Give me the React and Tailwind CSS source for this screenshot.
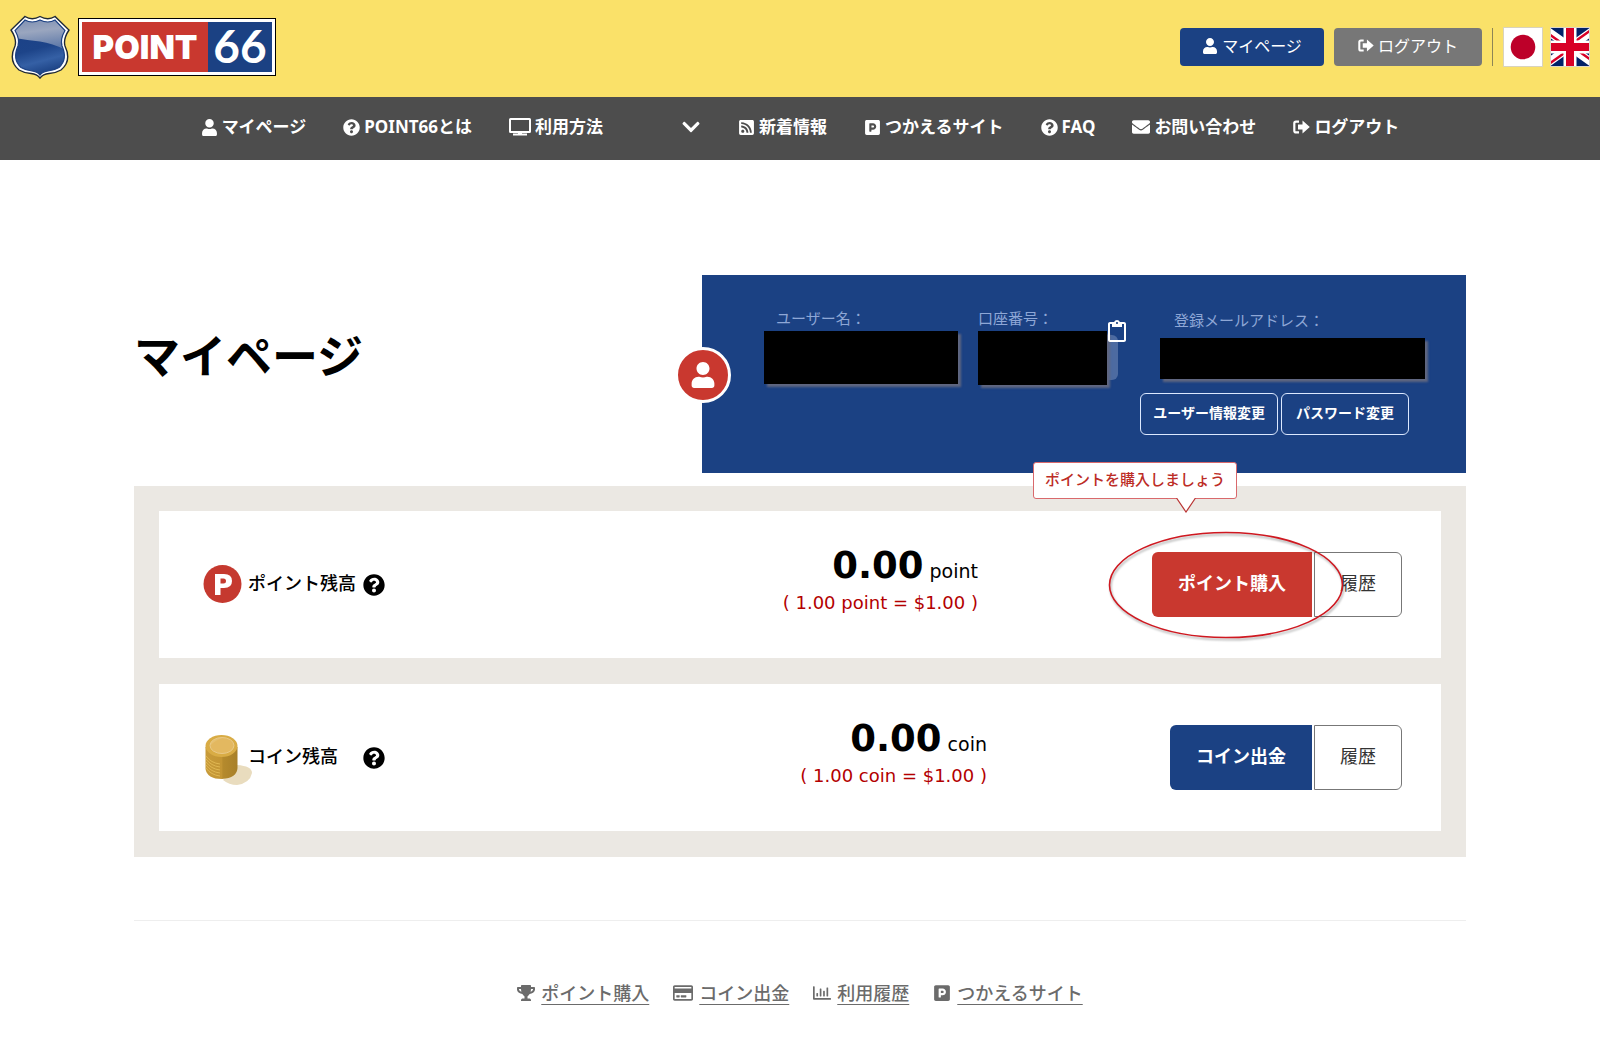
import { FaUser, FaQuestionCircle, FaChevronDown, FaRssSquare, FaParking, FaEnvelope, FaTrophy, FaRegCreditCard, FaRegChartBar } from "react-icons/fa";
import { MdContentPaste } from "react-icons/md";

function Shield() {
  return (
    <svg viewBox="0 0 60 64" className="h-16 w-15 shrink-0" aria-hidden="true">
      <defs>
        <linearGradient id="shieldBlue" x1="0" y1="0" x2="0.25" y2="1">
          <stop offset="0" stopColor="#1a3f85" />
          <stop offset="0.6" stopColor="#1d4489" />
          <stop offset="0.8" stopColor="#3560a5" />
          <stop offset="1" stopColor="#1b4183" />
        </linearGradient>
        <linearGradient id="shieldGloss" x1="0" y1="0" x2="0.2" y2="1">
          <stop offset="0" stopColor="#7386ad" />
          <stop offset="0.5" stopColor="#9aa6bf" />
          <stop offset="1" stopColor="#5d78a8" />
        </linearGradient>
        <clipPath id="shieldInner">
          <path d="M15 5 Q22 9 30 5 Q38 9 45 5 L55 15.500 Q50 24 52 31 Q58 44 49 52.500 Q44 55.500 38 56 Q33 56.500 30 60 Q27 56.500 22 56 Q16 55.500 11 52.500 Q2 44 8 31 Q10 24 5 15.500 Z" />
        </clipPath>
      </defs>
      <path d="M15 1.500 Q22 6 30 1.500 Q38 6 45 1.500 L59 15 Q53 24 55 31 Q62 46 51 55 Q46 58 39 58.500 Q33 59 30 63 Q27 59 21 58.500 Q14 58 9 55 Q-2 46 5 31 Q7 24 1 15 Z" fill="#fff" stroke="#1f2937" strokeWidth="1.400" />
      <g clipPath="url(#shieldInner)">
        <rect width="60" height="64" fill="url(#shieldBlue)" />
        <path d="M0 0 H60 V37 Q45 29 30 26.500 Q16 25 0 22 Z" fill="url(#shieldGloss)" />
      </g>
      <path d="M15 5 Q22 9 30 5 Q38 9 45 5 L55 15.500 Q50 24 52 31 Q58 44 49 52.500 Q44 55.500 38 56 Q33 56.500 30 60 Q27 56.500 22 56 Q16 55.500 11 52.500 Q2 44 8 31 Q10 24 5 15.500 Z" fill="none" stroke="#1c4183" strokeWidth="1.200" />
    </svg>
  );
}

function SignOut({ className }) {
  return (
    <svg viewBox="0 0 17 14" className={className} aria-hidden="true">
      <path d="M6 1.600 H3 Q1.300 1.600 1.300 3.300 V10.700 Q1.300 12.400 3 12.400 H6" fill="none" stroke="currentColor" strokeWidth="2.200" />
      <path d="M5 4.600 H9.500 V0.600 L16.800 7 L9.500 13.400 V9.400 H5 Z" fill="currentColor" />
    </svg>
  );
}

function Desktop() {
  return (
    <svg viewBox="0 0 22 18" className="h-[18px] w-[22px]" fill="none" aria-hidden="true">
      <rect x="1" y="1" width="20" height="13" rx="0.500" stroke="#fff" strokeWidth="2" />
      <path d="M9 14 H13 V15.500 H18 V17.500 H4 V15.500 H9 Z" fill="#fff" />
    </svg>
  );
}

function PointMark() {
  return (
    <svg viewBox="0 0 40 40" className="h-10 w-10" aria-hidden="true">
      <circle cx="20.500" cy="19" r="19" fill="#c5392f" />
      <path fillRule="evenodd" fill="#fff" d="M13 9 H22 Q30 9 30 16 Q30 23 22 23 H18.500 V30 H13 Z M18.500 13.500 V18.500 H21.500 Q24 18.500 24 16 Q24 13.500 21.500 13.500 Z" />
    </svg>
  );
}

function CoinStack() {
  return (
    <svg viewBox="-3 -2 48 52" className="h-[52px] w-12 overflow-visible" aria-hidden="true">
      <defs>
        <linearGradient id="coinSide" x1="0" y1="0" x2="1" y2="0">
          <stop offset="0" stopColor="#c89b3a" />
          <stop offset="0.5" stopColor="#c39534" />
          <stop offset="0.55" stopColor="#b58a2d" />
          <stop offset="1" stopColor="#a88029" />
        </linearGradient>
      </defs>
      <path d="M18 46 L32 31 Q47 32 47 39 Q45 49 32 51 Q24 51 18 46 Z" fill="#e9dcbe" />
      <path d="M0.500 13 V35 Q2 45 17 45 Q32 44 32.500 34 V13 Z" fill="url(#coinSide)" />
      <path d="M1 22 Q6 29 15 30 M1 25 Q6 32 15 33 M1 28 Q6 35 15 36 M1 31 Q6 38 15 39 M1 34 Q6 41 15 42" fill="none" stroke="#e0b752" strokeWidth="1" />
      <ellipse cx="16.500" cy="12" rx="16" ry="11" fill="#d9ac45" />
      <ellipse cx="17" cy="11.500" rx="12" ry="8" fill="#e6c070" />
      <path d="M5 12 Q10 6 19 3.600 Q29 5 29 11.500 Q28 15 24 18 Q18 20 12 19 Q6 17 5 12 Z" fill="#e3b860" />
      <ellipse cx="17" cy="11.500" rx="12" ry="8" fill="none" stroke="#e9c987" strokeWidth="1" />
    </svg>
  );
}

function Japan() {
  return (
    <svg viewBox="0 0 40 40" className="h-10 w-10" aria-hidden="true">
      <rect x="0.500" y="0.500" width="39" height="39" fill="#fff" stroke="#d9d3bd" />
      <circle cx="20" cy="20" r="12.300" fill="#bd0029" />
    </svg>
  );
}

function Britain() {
  return (
    <svg viewBox="0 0 40 40" className="h-10 w-10" aria-hidden="true">
      <rect width="40" height="40" fill="#012169" />
      <path d="M-8 0 L48 40 M48 0 L-8 40" stroke="#fff" strokeWidth="8" />
      <path d="M20 22 L-8 2 M20 18 L48 38 M20 18 L48 -2 M20 22 L-8 42" stroke="#d80027" strokeWidth="2.500" />
      <path d="M20 0 V40 M0 20 H40" stroke="#fff" strokeWidth="13" />
      <path d="M20 0 V40 M0 20 H40" stroke="#d80027" strokeWidth="8" />
      <rect x="0.500" y="0.500" width="39" height="39" fill="none" stroke="#ded7c4" />
    </svg>
  );
}

const menu = [
  { icon: <FaUser size={17} />, label: "マイページ" },
  { icon: <FaQuestionCircle size={17} />, label: "POINT66とは" },
  { icon: <Desktop />, label: "利用方法", more: true },
  { icon: <FaRssSquare size={17} />, label: "新着情報" },
  { icon: <FaParking size={17} />, label: "つかえるサイト" },
  { icon: <FaQuestionCircle size={17} />, label: "FAQ" },
  { icon: <FaEnvelope size={18} />, label: "お問い合わせ" },
  { icon: <SignOut className="h-[14px] w-[17px]" />, label: "ログアウト" },
];

const footerLinks = [
  { icon: <FaTrophy size={18} />, label: "ポイント購入" },
  { icon: <FaRegCreditCard size={20} />, label: "コイン出金" },
  { icon: <FaRegChartBar size={18} />, label: "利用履歴" },
  { icon: <FaParking size={18} />, label: "つかえるサイト" },
];

function Balance({ mark, label, unit, gap, action, actionColor, children }) {
  return (
    <section className="flex h-[147px] items-center bg-white pr-[39px] pl-[43px]">
      <div className="flex w-[46px] shrink-0 items-center">{mark}</div>
      <h2 className="w-[115px] pb-[3px] text-lg font-medium whitespace-nowrap text-black">{label}</h2>
      <button type="button" aria-label={`${label}について`} className="text-black">
        <FaQuestionCircle size={22} />
      </button>
      <div className="ml-auto pb-3 text-right font-['DejaVu_Sans','Noto_Sans_CJK_JP',sans-serif] whitespace-nowrap">
        <p className="text-[19px] leading-[44px] text-black">
          <strong className="text-[37px] font-bold">0.00</strong> {unit}
        </p>
        <p className="text-lg leading-5 text-[#b30000]">( 1.00 {unit} = $1.00 )</p>
      </div>
      <div className={`relative flex gap-0.5 ${gap}`}>
        <button type="button" className={`h-[65px] rounded-l-md px-[26px] pb-1 text-lg font-bold whitespace-nowrap text-white ${actionColor}`}>
          {action}
        </button>
        <button type="button" className="h-[65px] rounded-r-md border border-[#777] bg-white px-[25px] pb-1 text-lg whitespace-nowrap text-[#333]">
          履歴
        </button>
        {children}
      </div>
    </section>
  );
}

export default function App() {
  return (
    <div className="min-h-screen bg-white font-['Noto_Sans','Noto_Sans_CJK_JP',sans-serif] text-black">
      <header className="flex h-[97px] items-center justify-between bg-[#fae169] pr-[10px] pb-1 pl-[10px]">
        <a href="#" className="flex items-center gap-2">
          <Shield />
          <span className="flex h-[58px] border border-black bg-white p-[3px] text-white">
            <span className="flex w-[126px] items-center justify-center bg-[#c9382f] pt-0.5 font-['Inter',sans-serif] text-[33px] font-black">POINT</span>
            <span className="flex w-16 items-center justify-center bg-[#1b4183] pb-0.5 font-['Lato',sans-serif] text-[46px] leading-[46px] font-bold">66</span>
          </span>
        </a>
        <div className="flex items-center">
          <button type="button" className="flex h-[38px] w-36 items-center justify-center gap-1 rounded bg-[#1b4183] pb-0.5 text-base text-white">
            <FaUser size={16} />
            マイページ
          </button>
          <button type="button" className="ml-[10px] flex h-[38px] w-[148px] items-center justify-center gap-1 rounded bg-[#777] pb-0.5 text-base text-white">
            <SignOut className="h-[13px] w-4" />
            ログアウト
          </button>
          <span className="mr-[10px] ml-[10px] h-[38px] w-px bg-[#8d8556]" />
          <button type="button" aria-label="日本語"><Japan /></button>
          <button type="button" aria-label="English" className="ml-[7px]"><Britain /></button>
        </div>
      </header>

      <nav className="flex h-[63px] items-center justify-center gap-[37px] bg-[#4d4d4d] pb-[3px] text-[17px] font-bold text-white">
        {menu.map((item) => (
          <a key={item.label} href="#" className="flex items-center gap-1 whitespace-nowrap">
            {item.icon}
            {item.label}
            {item.more && <FaChevronDown size={20} className="ml-[74px]" />}
          </a>
        ))}
      </nav>

      <main className="px-[134px] pt-[115px]">
        <div className="flex justify-between">
          <h1 className="pt-[44px] text-[46px] leading-[72px] font-bold">マイページ</h1>
          <section className="relative h-[198px] w-[764px] bg-[#1b4183] pt-[31px] pl-[62px] text-[15px] text-[#8ea7d6]">
            <span className="absolute top-[72px] -left-[27px] flex h-14 w-14 items-center justify-center rounded-full border-[3px] border-white bg-[#c9382f] text-white">
              <FaUser size={26} />
            </span>
            <div className="flex">
              <div className="w-[194px]">
                <p className="pb-px pl-3 leading-6">ユーザー名：</p>
                <div className="h-[53px] bg-black shadow-[3px_3px_2px_#5f6680]" />
              </div>
              <div className="relative ml-5 w-[129px]">
                <p className="pb-px leading-6">口座番号：</p>
                <div className="absolute top-[29px] -right-[11px] h-[45px] w-5 rounded-md bg-[#4d6ba1]" />
                <div className="relative h-[54px] bg-black shadow-[3px_3px_2px_#5f6680]" />
                <button type="button" aria-label="口座番号をコピー" className="absolute top-[14px] -right-[22px] text-white">
                  <MdContentPaste size={24} />
                </button>
              </div>
              <div className="ml-[53px] w-[265px]">
                <p className="pt-0.5 pb-1.5 pl-[14px] leading-6">登録メールアドレス：</p>
                <div className="h-[41px] bg-black shadow-[3px_3px_2px_#5f6680]" />
              </div>
            </div>
            <div className="mt-[8px] flex justify-end gap-[3px] pr-[57px] text-sm font-bold text-white">
              <button type="button" className="h-[42px] rounded-md border border-[#dbe8ff] px-3 pb-0.5">ユーザー情報変更</button>
              <button type="button" className="h-[42px] rounded-md border border-[#dbe8ff] px-3.5 pb-0.5">パスワード変更</button>
            </div>
          </section>
        </div>

        <div className="mt-[13px] flex flex-col gap-[26px] bg-[#ebe8e3] px-[25px] pt-[25px] pb-[26px]">
          <Balance mark={<PointMark />} label="ポイント残高" unit="point" gap="ml-[174px]" action="ポイント購入" actionColor="bg-[#c9382f]">
            <svg viewBox="0 0 240 112" className="pointer-events-none absolute -top-[22px] -left-[45px] h-28 w-60 drop-shadow-[1px_2px_1px_rgba(0,0,0,0.35)]" fill="none" aria-hidden="true">
              <ellipse cx="119" cy="55" rx="116.500" ry="52.500" stroke="#cf1820" strokeWidth="1.600" />
            </svg>
            <div className="absolute -top-[90px] -left-[119px] rounded-[3px] border border-[#d9696c] bg-white px-[11px] pb-0.5 text-[15px] leading-[33px] font-medium whitespace-nowrap text-[#bc2c26]">
              ポイントを購入しましょう
              <svg viewBox="0 0 20 15" className="absolute top-[35px] left-[142px] h-[15px] w-5" aria-hidden="true">
                <path d="M0.500 0 L10 14 L19.500 0" fill="#fff" stroke="#b93433" strokeWidth="1.200" />
              </svg>
            </div>
          </Balance>
          <Balance mark={<CoinStack />} label="コイン残高" unit="coin" gap="ml-[183px]" action="コイン出金" actionColor="bg-[#1b4183]" />
        </div>

        <footer className="mt-[63px] flex justify-center gap-[24px] border-t border-[#eee] pt-[58px] pb-8 text-lg font-medium text-[#6b6b6b]">
          {footerLinks.map((item) => (
            <a key={item.label} href="#" className="flex items-center gap-1.5 whitespace-nowrap">
              {item.icon}
              <span className="underline underline-offset-4">{item.label}</span>
            </a>
          ))}
        </footer>
      </main>
    </div>
  );
}
